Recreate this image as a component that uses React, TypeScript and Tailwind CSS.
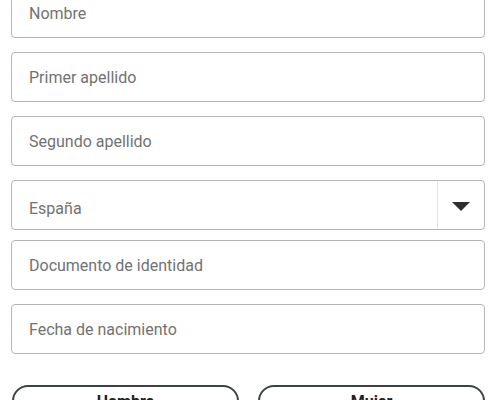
import { ChangeEvent, useState } from "react";

const fields = ["Nombre", "Primer apellido", "Segundo apellido"];
const fieldsAfter = ["Documento de identidad", "Fecha de nacimiento"];

function TextField({ placeholder }: { placeholder: string }) {
  return (
    <input
      type="text"
      placeholder={placeholder}
      className="block h-[50px] w-full rounded-[4px] border border-[#b5b5b5] bg-white px-[17px] pt-[1px] text-[16px] text-[#333] placeholder:text-[#727272] outline-none"
    />
  );
}

export default function App() {
  const [country, setCountry] = useState("España");
  const [gender, setGender] = useState<string | null>(null);

  return (
    <div className="min-h-screen bg-white pl-[11px] pr-[10px] font-['Roboto',sans-serif]">
      <div className="mt-[-12px] flex flex-col gap-[14px]">
        {fields.map((f) => (
          <TextField key={f} placeholder={f} />
        ))}

        {/* Country select */}
        <div className="relative flex h-[50px] w-full rounded-[4px] border border-[#b5b5b5] bg-white">
          <select
            value={country}
            onChange={(e: ChangeEvent<HTMLSelectElement>) => setCountry(e.target.value)}
            className="h-full flex-1 appearance-none bg-transparent pl-[17px] pt-[8px] text-[16px] text-[#727272] outline-none"
          >
            <option>España</option>
            <option>Portugal</option>
            <option>Francia</option>
          </select>
          <div className="pointer-events-none flex w-[47px] items-center justify-center border-l border-[#e6e6e6]">
            <svg width="18" height="9" viewBox="0 0 18 9" className="mt-[2px]">
              <path d="M0 0h18L9 9z" fill="#2f2f2f" />
            </svg>
          </div>
        </div>
      </div>

      <div className="mt-[10px] flex flex-col gap-[14px]">
        {fieldsAfter.map((f) => (
          <TextField key={f} placeholder={f} />
        ))}
      </div>

      <div className="mt-[31px] flex gap-[19px] pl-[1px]">
        {["Hombre", "Mujer"].map((g) => (
          <button
            key={g}
            onClick={() => setGender(g)}
            className={`flex h-[48px] flex-1 items-start justify-center rounded-[16px] border-2 border-[#3c4347] pt-[5px] text-[16px] leading-[20px] font-bold text-[#222] ${
              gender === g ? "bg-[#f1f1f1]" : "bg-white"
            }`}
          >
            {g}
          </button>
        ))}
      </div>
    </div>
  );
}
